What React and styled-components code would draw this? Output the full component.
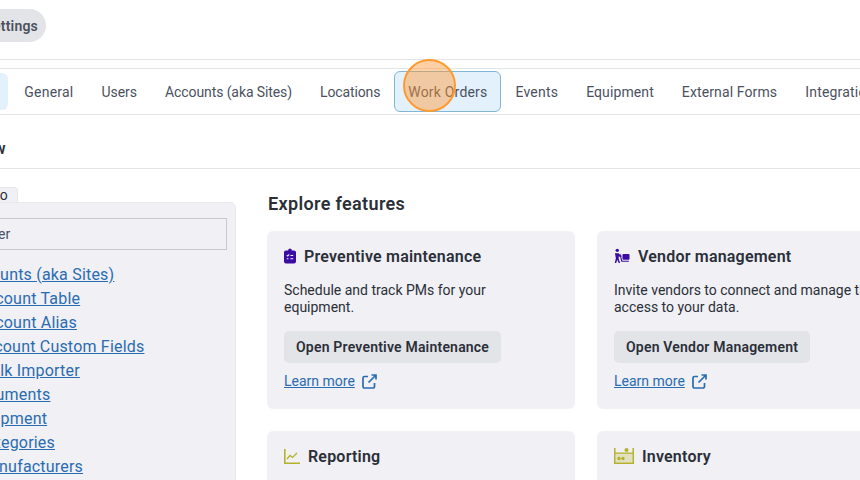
import React from 'react';
import styled, { createGlobalStyle } from 'styled-components';

const GlobalStyle = createGlobalStyle`
  html, body {
    margin: 0;
    padding: 0;
    background: #fff;
    overflow: hidden;
  }
`;

const Page = styled.div`
  width: 860px;
  height: 480px;
  overflow: hidden;
  font-family: Roboto, "Liberation Sans", sans-serif;
  letter-spacing: 0.2px;
  color: #2b2f38;
`;

// the screenshot was taken with the page scrolled sideways
const Shifted = styled.div`
  margin-left: -100px;
  width: 1300px;
`;

const TopBar = styled.div`
  height: 60px;
  display: flex;
  align-items: flex-start;
  padding-top: 9px;
  box-sizing: border-box;
  border-bottom: 1px solid #e3e4e6;
`;

const Pill = styled.div`
  margin-left: 66px;
  height: 33px;
  width: 80px;
  box-sizing: border-box;
  padding-right: 8px;
  display: flex;
  align-items: center;
  justify-content: flex-end;
  border-radius: 17px;
  background: #e3e4e7;
  color: #4b5160;
  font-size: 14px;
  font-weight: 600;
`;

const TabBar = styled.nav`
  margin-top: 8px;
  height: 47px;
  box-sizing: border-box;
  padding-left: 22px;
  display: flex;
  align-items: center;
  border-top: 1px solid #e3e4e6;
  border-bottom: 1px solid #e3e4e6;
`;

const Tab = styled.div`
  position: relative;
  box-sizing: border-box;
  height: ${(p) => (p.$outlined ? '41px' : '37px')};
  display: flex;
  align-items: center;
  padding: 0 ${(p) => (p.$outlined ? '13px' : '14px')};
  margin-right: ${(p) => (p.$first ? '2px' : '0')};
  border-radius: 6px;
  font-size: 14px;
  letter-spacing: ${(p) => p.$spacing ?? 0.2}px;
  color: #4b5160;
  white-space: nowrap;
  background: ${(p) => (p.$active ? '#e3f1fc' : 'transparent')};
  border: ${(p) => (p.$outlined ? '1px solid #82b6d4' : 'none')};
`;

const Highlight = styled.span`
  position: absolute;
  left: 8px;
  top: -13px;
  width: 53px;
  height: 53px;
  box-sizing: border-box;
  border-radius: 50%;
  border: 2px solid #ff9a2e;
  background: rgba(255, 150, 50, 0.45);
`;

const SectionHead = styled.div`
  height: 54px;
  box-sizing: border-box;
  padding: 24px 0 0 38px;
  border-bottom: 1px solid #e3e4e6;
  font-size: 16px;
  font-weight: 600;
  line-height: 20px;
`;

const Body = styled.div`
  display: flex;
  align-items: flex-start;
`;

const Side = styled.aside`
  margin-top: 18px;
  margin-left: 54px;
  width: 282px;
  flex: none;
`;

const SideTab = styled.div`
  width: 64px;
  height: 15px;
  box-sizing: border-box;
  padding-right: 9px;
  text-align: right;
  background: #f0f0f5;
  border: 1px solid #e6e6ec;
  border-bottom: none;
  border-radius: 4px 4px 0 0;
  font-size: 14px;
  line-height: 15px;
`;

const SidePanel = styled.div`
  background: #f0f0f5;
  border-radius: 0 6px 0 0;
  border: 1px solid #e8e8ee;
  padding: 15px 8px 0 8px;
  height: 300px;
  box-sizing: border-box;
`;

const FilterBox = styled.div`
  height: 32px;
  box-sizing: border-box;
  border: 1px solid #c8c9ce;
  padding-left: 14px;
  font-size: 14px;
  line-height: 30px;
  color: #4b5160;
`;

const LinkList = styled.ul`
  list-style: none;
  margin: 13px 0 0;
  padding: 0;
`;

const SideLink = styled.li`
  height: 24px;
  line-height: 24px;
  font-size: 16px;
  padding-left: ${(p) => p.$indent}px;
  color: #2a6cb0;
  text-decoration: underline;
  white-space: nowrap;
`;

const Main = styled.main`
  margin-left: 31px;
  flex: none;
  width: 800px;
`;

const MainTitle = styled.h2`
  margin: 23px 0 15px 1px;
  height: 24px;
  font-size: 18px;
  line-height: 24px;
  font-weight: 600;
  letter-spacing: 0.35px;
`;

const CardGrid = styled.div`
  display: grid;
  grid-template-columns: 308px 308px;
  gap: 22px;
`;

const Card = styled.section`
  background: #f0f0f5;
  border-radius: 6px;
  height: 178px;
  box-sizing: border-box;
  padding: 14px 17px;
`;

const CardHead = styled.div`
  display: flex;
  align-items: center;
  gap: 8px;
  height: 22px;
  font-size: 16px;
  font-weight: 600;
`;

const CardText = styled.p`
  margin: 15px 0 15px;
  font-size: 14px;
  line-height: 17px;
  letter-spacing: 0;
  width: 274px;
`;

const OpenButton = styled.div`
  display: inline-flex;
  align-items: center;
  height: 32px;
  padding: 0 12px;
  border-radius: 5px;
  background: #e3e4e8;
  font-size: 14px;
  font-weight: 600;
  white-space: nowrap;
`;

const LearnRow = styled.div`
  display: flex;
  align-items: center;
  gap: 7px;
  margin-top: 10px;
  color: #2a6cb0;
  font-size: 14px;
  letter-spacing: 0;
`;

const LearnText = styled.span`
  text-decoration: underline;
`;

const ExternalIcon = () => (
  <svg width="15" height="15" viewBox="0 0 15 15" fill="none" stroke="#2a6cb0" strokeWidth="1.700">
    <path d="M6 2.500H2.500a1.500 1.500 0 0 0-1.500 1.500v8.500a1.500 1.500 0 0 0 1.500 1.500H11a1.500 1.500 0 0 0 1.500-1.500V9" />
    <path d="M6.500 8.500L14 1M9.500 1H14v4.500" />
  </svg>
);

const ClipboardIcon = () => (
  <svg width="12" height="16" viewBox="0 0 13 16">
    <path fill="#3a0ca3" d="M4.500 2C4.700.8 5.500 0 6.500 0s1.800.8 2 2H11c1.100 0 2 .9 2 2v10c0 1.100-.9 2-2 2H2c-1.100 0-2-.9-2-2V4c0-1.100.9-2 2-2z" />
    <path fill="none" stroke="#f0f0f5" strokeWidth="1.100" d="M3 7l1 1 1.600-1.800M7 7.500h3M3 11h1.800M7 11h3" />
  </svg>
);

const VendorIcon = () => (
  <svg width="16" height="16" viewBox="0 0 17 16">
    <g fill="#3a0ca3">
      <circle cx="3.500" cy="2" r="1.800" />
      <path d="M1 5h4l1.500 2.500H8v1.300H5.500L5 8v3l1.500 4.500H5L3.500 12 2.300 15.500H.8L2 10.500z" />
      <rect x="9" y="6" width="7.500" height="6" rx="1" />
      <path d="M6.800 5.500l2 7.500h7v1.200H7.800l-2-8.300z" />
    </g>
  </svg>
);

const ChartIcon = () => (
  <svg width="16" height="15" viewBox="0 0 16 15">
    <path fill="none" stroke="#b5b22a" strokeWidth="1.600" d="M.8 0v14.200H16" />
    <path fill="none" stroke="#b5b22a" strokeWidth="1.300" d="M3 10l3-3.500 2.500 2L13 4" />
  </svg>
);

const ShelfIcon = () => (
  <svg width="20" height="16" viewBox="0 0 20 16">
    <g fill="#b5b22a">
      <rect x="0" y="0" width="1.500" height="16" />
      <rect x="18.500" y="0" width="1.500" height="16" />
      <rect x="0" y="4.500" width="20" height="1.300" />
      <rect x="0" y="14.500" width="20" height="1.500" />
      <rect x="1.500" y="6" width="17" height="8.500" opacity="0.25" />
      <circle cx="12.500" cy="2" r="2" />
      <circle cx="5" cy="10.500" r="1.700" />
      <circle cx="9" cy="10.500" r="1.700" />
    </g>
  </svg>
);

const tabs = [
  ['General'],
  ['Users', 0],
  ['Accounts (aka Sites)', -0.1],
  ['Locations', -0.13],
];
const tabsAfter = [
  ['Events'],
  ['Equipment', 0.1],
  ['External Forms', 0.12],
  ['Integrations'],
];

const sideLinks = [
  ['Accounts (aka Sites)', 0],
  ['Account Table', 13],
  ['Account Alias', 13],
  ['Account Custom Fields', 12],
  ['Bulk Importer', 18],
  ['Documents', 4],
  ['Equipment', 6],
  ['Categories', 13],
  ['Manufacturers', 13],
];

const cards = [
  {
    icon: <ClipboardIcon />,
    title: 'Preventive maintenance',
    text: 'Schedule and track PMs for your equipment.',
    button: 'Open Preventive Maintenance',
  },
  {
    icon: <VendorIcon />,
    title: 'Vendor management',
    text: 'Invite vendors to connect and manage their access to your data.',
    button: 'Open Vendor Management',
  },
  { icon: <ChartIcon />, title: 'Reporting' },
  { icon: <ShelfIcon />, title: 'Inventory' },
];

export default function App() {
  return (
    <Page>
      <GlobalStyle />
      <Shifted>
        <TopBar>
          <Pill>Settings</Pill>
        </TopBar>
        <TabBar>
          <Tab $active $first>Overview</Tab>
          {tabs.map(([t, spacing]) => <Tab key={t} $spacing={spacing}>{t}</Tab>)}
          <Tab $active $outlined>
            Work Orders
            <Highlight />
          </Tab>
          {tabsAfter.map(([t, spacing]) => <Tab key={t} $spacing={spacing}>{t}</Tab>)}
        </TabBar>
        <SectionHead>Overview</SectionHead>
        <Body>
          <Side>
            <SideTab>Info</SideTab>
            <SidePanel>
              <FilterBox>Filter</FilterBox>
              <LinkList>
                {sideLinks.map(([label, indent]) => (
                  <SideLink key={label} $indent={indent}>{label}</SideLink>
                ))}
              </LinkList>
            </SidePanel>
          </Side>
          <Main>
            <MainTitle>Explore features</MainTitle>
            <CardGrid>
              {cards.map((c) => (
                <Card key={c.title}>
                  <CardHead>{c.icon}{c.title}</CardHead>
                  {c.text && <CardText>{c.text}</CardText>}
                  {c.button && <OpenButton>{c.button}</OpenButton>}
                  {c.button && (
                    <LearnRow>
                      <LearnText>Learn more</LearnText> <ExternalIcon />
                    </LearnRow>
                  )}
                </Card>
              ))}
            </CardGrid>
          </Main>
        </Body>
      </Shifted>
    </Page>
  );
}
